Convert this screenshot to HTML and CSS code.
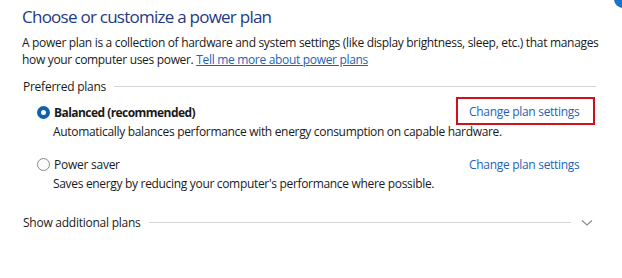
FILE: index.html
```html
<!DOCTYPE html>
<html>
<head>
<meta charset="utf-8">
<link rel="stylesheet" href="styles.css">
</head>
<body>
<div class="help-corner"></div>
<div class="page">
  <h1 class="title">Choose or customize a power plan</h1>
  <p class="intro"><span class="intro-line">A power plan is a collection of hardware and system settings (like display brightness, sleep, etc.) that manages</span> <span class="intro-tail">how your computer uses power. <a class="link underline" href="#">Tell me more about power plans</a></span></p>

  <div class="group-head"><span class="group-label">Preferred plans</span><span class="rule"></span></div>

  <div class="plan">
    <div class="plan-row">
      <span class="radio checked"></span>
      <span class="plan-name bold">Balanced (recommended)</span>
      <span class="highlight"><a class="link" href="#">Change plan settings</a></span>
    </div>
    <div class="plan-desc">Automatically balances performance with energy consumption on capable hardware.</div>
  </div>

  <div class="plan second">
    <div class="plan-row">
      <span class="radio"></span>
      <span class="plan-name">Power saver</span>
      <span class="plain-link"><a class="link" href="#">Change plan settings</a></span>
    </div>
    <div class="plan-desc">Saves energy by reducing your computer's performance where possible.</div>
  </div>

  <div class="group-head more"><span class="group-label">Show additional plans</span><span class="rule short"></span>
    <svg class="chevron" width="12" height="8" viewBox="0 0 12 8"><path d="M1 1.5 L6 6 L11 1.5" fill="none" stroke="#8a8a8a" stroke-width="1.1"/></svg>
  </div>
</div>
</body>
</html>
```
FILE: styles.css
```css
html, body {
  margin: 0;
  padding: 0;
  background: #ffffff;
}
body {
  font-family: "Open Sans", "Noto Sans", sans-serif;
  font-size: 12px;
  color: #1a1a1a;
  position: relative;
  width: 622px;
  height: 278px;
  overflow: hidden;
}
.help-corner {
  position: absolute;
  top: -10px;
  right: -10px;
  width: 18px;
  height: 18px;
  border-radius: 50%;
  background: #1a73c4;
}
.page {
  padding: 4px 22px 0 22px;
}
.title {
  margin: 0;
  font-weight: 400;
  font-size: 17px;
  line-height: 26px;
  color: #1f3a7f;
  letter-spacing: -0.75px;
}
.intro {
  margin: 5px 0 0 0;
  line-height: 16.5px;
  letter-spacing: -0.32px;
  width: 590px;
}
.intro-line,
.intro-tail {
  display: block;
  white-space: nowrap;
}
.link {
  color: #1f62b3;
  text-decoration: none;
}
.underline {
  text-decoration: underline;
}
.group-head {
  display: flex;
  align-items: center;
  margin-top: 10px;
  height: 16px;
  padding-left: 1px;
}
.group-label {
  letter-spacing: -0.25px;
}
.rule {
  flex: 1;
  height: 1px;
  background: #d5d5d5;
  margin-left: 8px;
  margin-right: 4px;
}
.rule.short {
  margin-right: 10px;
}
.plan {
  margin-top: 10px;
  padding-left: 15px;
}
.plan.second {
  margin-top: 16px;
}
.plan-row {
  display: flex;
  align-items: center;
  height: 16px;
}
.radio {
  box-sizing: border-box;
  width: 13px;
  height: 13px;
  border-radius: 50%;
  border: 1px solid #8a8a8a;
  background: #fbfbfb;
  margin-right: 4px;
}
.radio.checked {
  border: 4px solid #0f62ae;
  background: #ffffff;
}
.plan-name {
  flex: 1;
  letter-spacing: -0.25px;
}
.plan-name.bold {
  font-weight: 700;
  letter-spacing: -0.55px;
}
.highlight {
  box-sizing: border-box;
  border: 2.5px solid #d0111b;
  height: 28px;
  width: 139px;
  display: flex;
  align-items: center;
  padding-left: 11px;
  margin-right: 5px;
  margin-top: -2px;
  letter-spacing: -0.3px;
}
.plain-link {
  width: 139px;
  padding-left: 13px;
  box-sizing: border-box;
  margin-right: 5px;
  letter-spacing: -0.3px;
}
.plan-desc {
  padding-left: 16px;
  margin-top: 4px;
  line-height: 16px;
  letter-spacing: -0.32px;
}
.group-head.more {
  margin-top: 22px;
  padding-right: 7px;
}
.chevron {
  display: block;
  margin-top: 2px;
}
```
